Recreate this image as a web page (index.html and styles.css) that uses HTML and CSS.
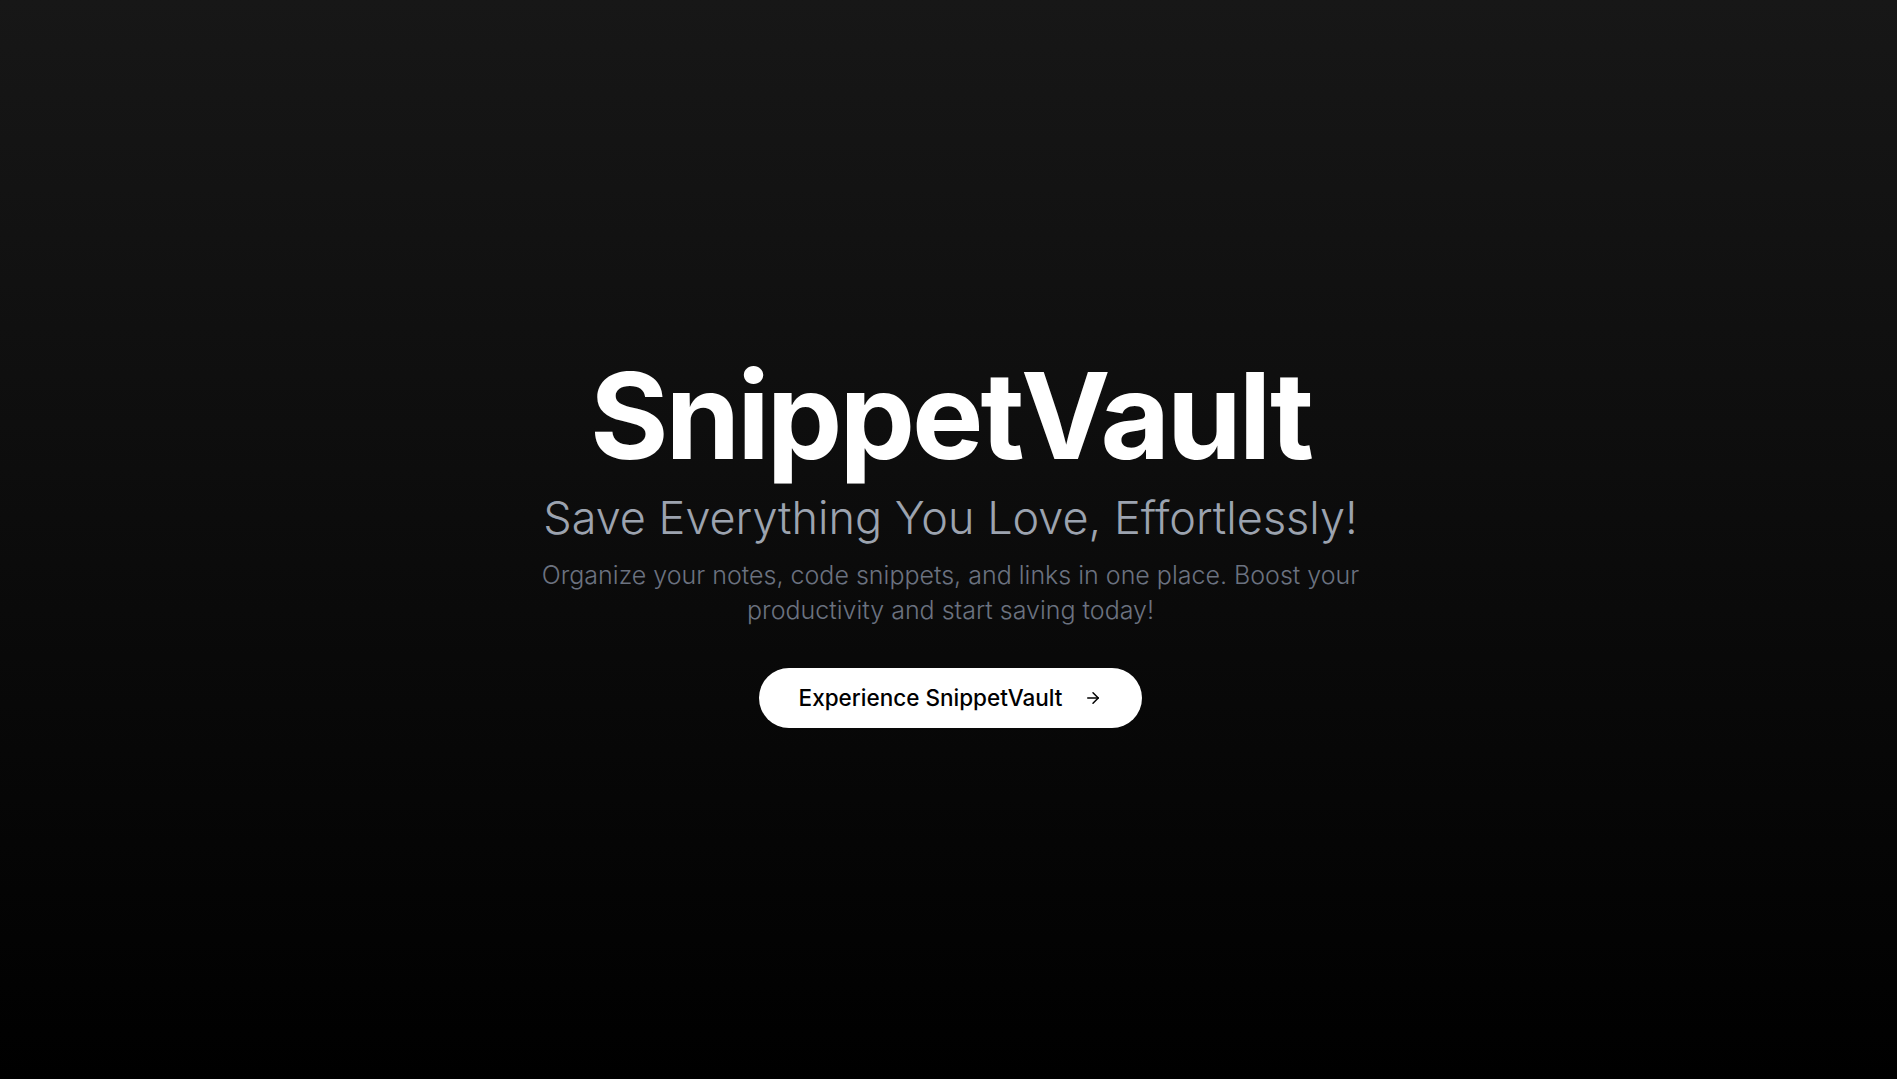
FILE: index.html
```html
<!DOCTYPE html>
<html lang="en">
<head>
<meta charset="utf-8">
<title>SnippetVault</title>
<link rel="stylesheet" href="styles.css">
</head>
<body>
<main class="hero">
  <div class="hero-inner">
    <h1 class="title">SnippetVault</h1>
    <h2 class="subtitle">Save Everything You Love, Effortlessly!</h2>
    <p class="lead">Organize your notes, code snippets, and links in one place. Boost your productivity and start saving today!</p>
    <a class="cta" href="#">
      <span>Experience SnippetVault</span>
      <svg class="arrow" width="16" height="16" viewBox="0 0 24 24" fill="none" stroke="currentColor" stroke-width="2" stroke-linecap="round" stroke-linejoin="round"><path d="M5 12h14"/><path d="m12 5 7 7-7 7"/></svg>
    </a>
  </div>
</main>
</body>
</html>
```

FILE: styles.css
```css
* { box-sizing: border-box; }
html, body { margin: 0; padding: 0; height: 100%; }
body {
  font-family: Inter, "Noto Sans", sans-serif;
  background: linear-gradient(to bottom, #171717, #000000);
  color: #fff;
}
.hero {
  min-height: 100vh;
  display: flex;
  align-items: center;
  justify-content: center;
}
.hero-inner {
  display: flex;
  flex-direction: column;
  align-items: center;
  text-align: center;
  max-width: 896px;
  margin-top: 4px;
  margin-left: 4px;
}
.title {
  margin: 0;
  font-size: 120px;
  font-weight: 700;
  letter-spacing: -0.025em;
  line-height: 1;
  color: #fff;
}
.subtitle {
  margin: 19px 0 0;
  font-size: 45px;
  font-weight: 300;
  line-height: 1;
  color: #9ca3af;
}
.lead {
  margin: 18px 0 0;
  font-size: 25px;
  font-weight: 300;
  line-height: 35px;
  color: #6b7280;
}
.cta {
  margin-top: 40px;
  display: inline-flex;
  align-items: center;
  gap: 22px;
  height: 60px;
  padding: 0 40px;
  background: #fff;
  color: #000;
  border-radius: 9999px;
  text-decoration: none;
  font-size: 22.5px;
  font-weight: 500;
}
.arrow { width: 18px; height: 18px; }
```
